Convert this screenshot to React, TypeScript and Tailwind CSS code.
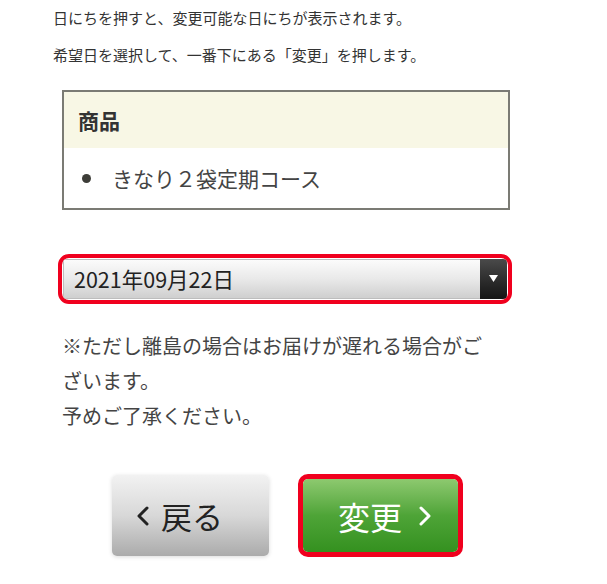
import React from "react";

export default function App() {
  return (
    <div
      className="w-[607px] h-[584px] bg-white overflow-hidden text-[#333]"
      style={{ fontFamily: '"Noto Sans CJK JP", "Noto Sans", sans-serif' }}
    >
      <p className="ml-[53px] pt-[8px] text-[15px] leading-[20px] text-[#333]">
        日にちを押すと、変更可能な日にちが表示されます。
      </p>
      <p className="ml-[53px] mt-[17px] text-[15px] leading-[20px] text-[#333]">
        希望日を選択して、一番下にある「変更」を押します。
      </p>

      <div className="ml-[62px] mt-[25px] w-[448px] h-[120px] border-2 border-[#7b7b74] flex flex-col">
        <div className="h-[56px] bg-[#f8f7e5] flex items-center pl-[14px]">
          <span className="text-[21px] font-bold text-[#333] leading-none">商品</span>
        </div>
        <div className="flex-1 flex items-center pl-[18px]">
          <span className="w-[9px] h-[9px] rounded-full bg-[#3d3d38]" />
          <span className="ml-[21px] text-[21px] text-[#444] leading-none">きなり２袋定期コース</span>
        </div>
      </div>

      <div className="ml-[58px] mt-[44px] w-[454px] h-[50px] border-[4px] border-[#f0001e] rounded-[11px] p-[1px]">
        <div className="h-full flex rounded-[4px] overflow-hidden">
          <div className="flex-1 flex items-center pl-[10px] bg-gradient-to-b from-[#fbfbfb] via-[#e9e9e9] to-[#cfcfcf] border-y border-l border-[#bdbdbd]">
            <span className="text-[21.5px] text-[#222] leading-none">2021年09月22日</span>
          </div>
          <div className="w-[27px] flex items-center justify-center bg-gradient-to-b from-[#4a4a4a] to-[#151515]">
            <svg width="9" height="8" viewBox="0 0 9 8">
              <polygon points="0,0 9,0 4.5,7" fill="#ffffff" />
            </svg>
          </div>
        </div>
      </div>

      <div className="ml-[62px] mt-[24px] text-[20px] leading-[35px] text-[#444]">
        ※ただし離島の場合はお届けが遅れる場合がご
        <br />
        ざいます。
        <br />
        予めご了承ください。
      </div>

      <div className="flex mt-[41px] ml-[112px] gap-[29px]">
        <button className="w-[157px] h-[81px] mt-[1px] rounded-[5px] bg-gradient-to-b from-[#f2f2f2] via-[#d8d8d8] to-[#ababab] shadow-[0_1px_4px_rgba(0,0,0,0.15)] flex items-center pl-[24px] text-[#222]">
          <svg width="14" height="22" viewBox="0 0 14 22" className="mr-[11px]">
            <polyline points="11,3 3,11 11,19" fill="none" stroke="#222" strokeWidth="3" strokeLinecap="round" strokeLinejoin="round" />
          </svg>
          <span className="text-[31px] leading-none">戻る</span>
        </button>
        <div className="w-[165px] h-[83px] border-[5px] border-[#f0001e] rounded-[10px] overflow-hidden">
          <button className="w-full h-full rounded-[4px] bg-gradient-to-b from-[#8dc96f] via-[#4ea437] to-[#34911f] flex items-center pl-[35px] text-white">
            <span className="text-[32px] leading-none">変更</span>
            <svg width="14" height="22" viewBox="0 0 14 22" className="ml-[16px]">
              <polyline points="3,3 11,11 3,19" fill="none" stroke="#ffffff" strokeWidth="3" strokeLinecap="round" strokeLinejoin="round" />
            </svg>
          </button>
        </div>
      </div>
    </div>
  );
}
